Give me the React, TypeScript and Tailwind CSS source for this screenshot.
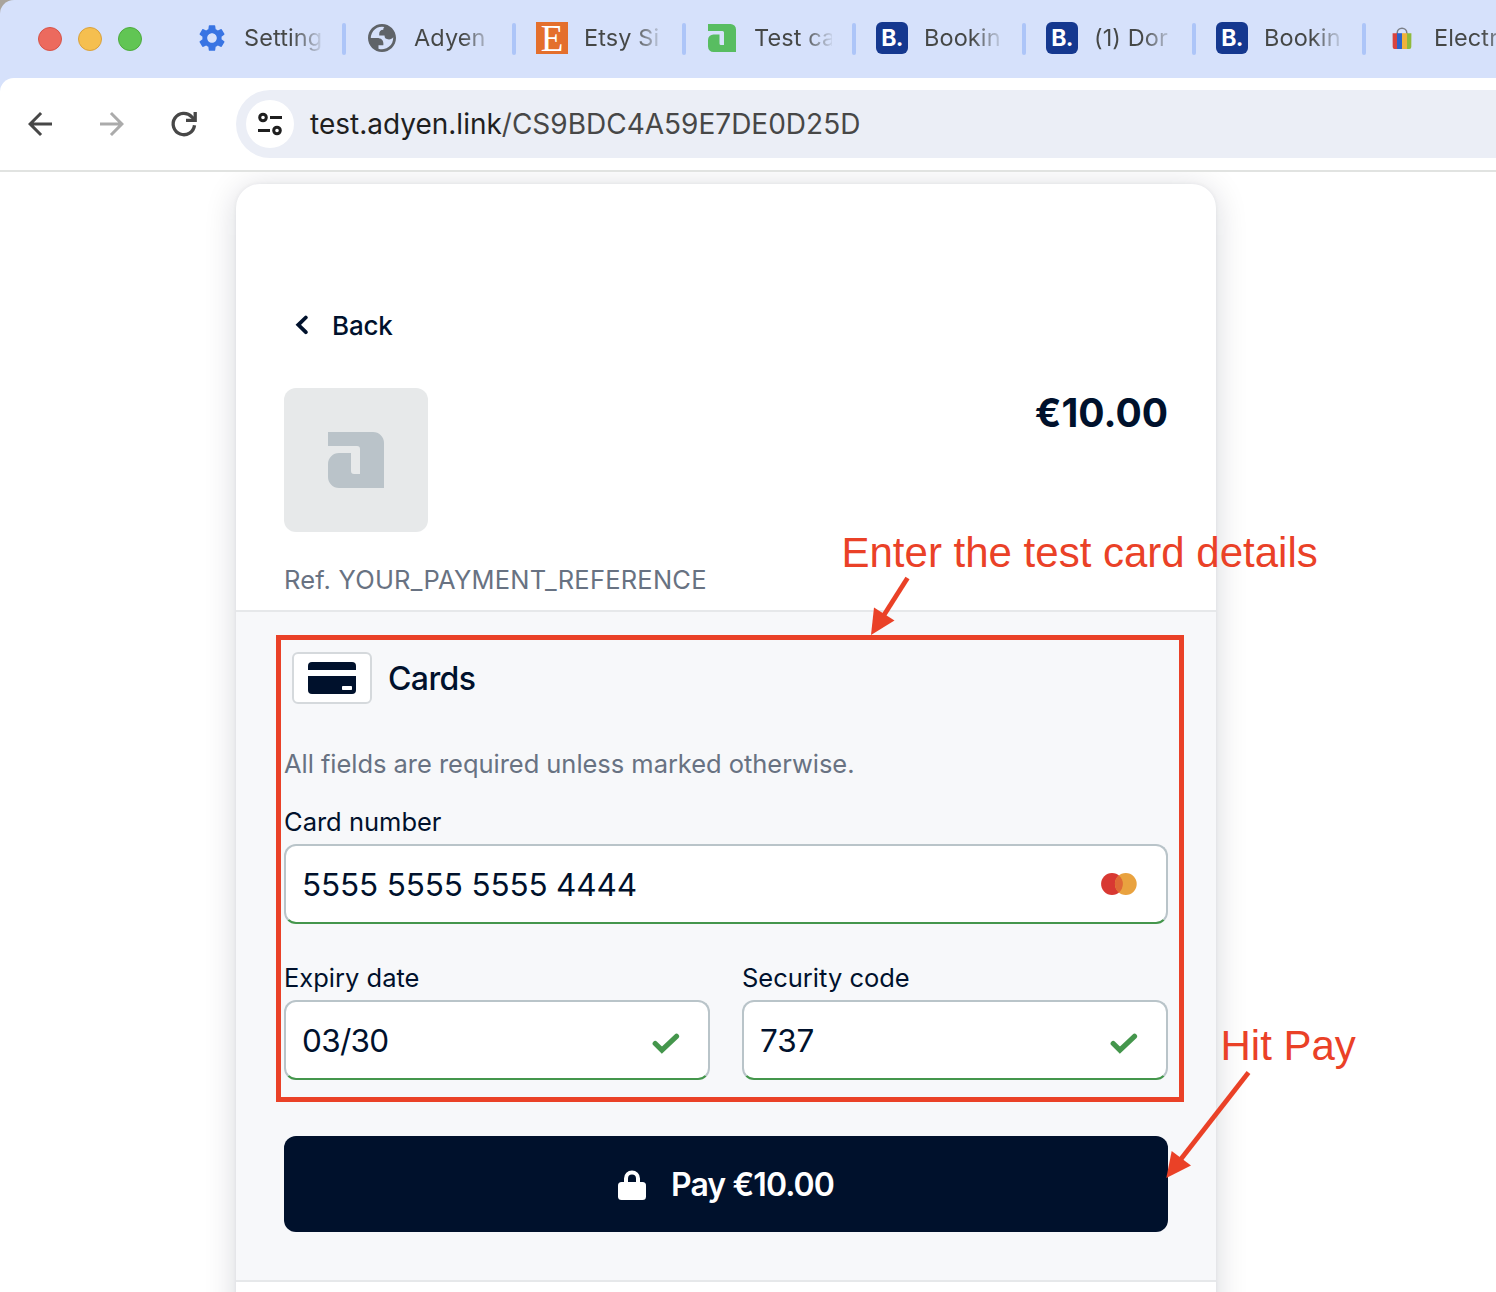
import React from "react";
import { MdArrowBack, MdArrowForward, MdSettings } from "react-icons/md";

function AdyenMark({ className }: { className: string }) {
  return (
    <svg viewBox="0 0 56 56" className={className} fill="currentColor">
      <path d="M0 0H45A11 11 0 0 1 56 11V56H11A11 11 0 0 1 0 45V32A11 11 0 0 1 11 21H23V39A3 3 0 0 0 26 42H32V17A3 3 0 0 0 29 14H0Z" />
    </svg>
  );
}

function BookingIcon() {
  return (
    <span className="flex h-8 w-8 items-center justify-center rounded-[6px] bg-[#15388f] text-[23px] font-bold leading-8 tracking-[-0.7px] text-white">
      B.
    </span>
  );
}

function EtsyIcon() {
  return (
    <span className="flex h-8 w-8 items-center justify-center bg-[#e46f2c] font-['Liberation_Serif',serif] text-[37px] leading-8 text-white">
      <span className="-mb-0.5">E</span>
    </span>
  );
}

function GlobeIcon() {
  return (
    <svg viewBox="2 2 20 20" className="h-7 w-7" fill="#5f6368" fillRule="evenodd">
      <path d="M12 2C6.480 2 2 6.480 2 12s4.480 10 10 10 10-4.480 10-10S17.520 2 12 2zM4 12h4.400c3.407.022 4.922 1.730 4.543 5.127H9.488v2.470a8.004 8.004 0 0 0 10.498-8.083C19.327 12.504 18.332 13 17 13c-2.137 0-3.206-.916-3.206-2.750h-3.748c-.274-2.728.683-4.092 2.870-4.092 0-.975.327-1.597.811-1.970A8 8 0 0 0 4 12z" />
    </svg>
  );
}

function EbayBag() {
  return (
    <svg viewBox="0 0 20 24" className="h-6 w-5">
      <path d="M5.200 8V7a4.800 4.800 0 0 1 9.600 0v1" fill="none" stroke="#7b7f87" strokeWidth="1.500" />
      <path d="M.6 7.200H5V23H2.500A2 2 0 0 1 .7 21Z" fill="#d8423f" />
      <path d="M5 7.200h5V23H5Z" fill="#2b62cc" />
      <path d="M10 7.200h5V23h-5Z" fill="#f0b23c" />
      <path d="M15 7.200h4.400L19.300 21a2 2 0 0 1-2 2H15Z" fill="#8fba3c" />
    </svg>
  );
}

const tabs = [
  { title: "Setting", icon: <MdSettings className="h-8 w-8 text-[#3874e3]" /> },
  { title: "Adyen", icon: <GlobeIcon /> },
  { title: "Etsy Si", icon: <EtsyIcon /> },
  { title: "Test ca", icon: <AdyenMark className="h-7 w-7 text-[#58bd61]" /> },
  { title: "Bookin", icon: <BookingIcon /> },
  { title: "(1) Dor", icon: <BookingIcon /> },
  { title: "Bookin", icon: <BookingIcon /> },
  { title: "Electr", icon: <EbayBag /> },
];

function TabStrip() {
  return (
    <div className="flex h-[78px] items-center overflow-hidden rounded-tl-[14px] bg-[#d6e1fb] pl-[38px]">
      <div className="flex w-[138px] shrink-0 gap-4">
        <span className="h-6 w-6 rounded-full border border-[#d65348] bg-[#ec6a5e]" />
        <span className="h-6 w-6 rounded-full border border-[#d9a13c] bg-[#f5bf4f]" />
        <span className="h-6 w-6 rounded-full border border-[#4dab3d] bg-[#61c554]" />
      </div>
      {tabs.map((tab, i) => (
        <div key={i} className="flex w-[170px] shrink-0 items-center pb-0.5">
          <span className="ml-4 flex w-10 shrink-0 items-center justify-center">{tab.icon}</span>
          <span className="ml-3 w-[78px] overflow-hidden whitespace-nowrap bg-[linear-gradient(90deg,#454746_62%,#45474600_104%)] bg-clip-text text-[23.5px] leading-8 tracking-[0.1px] text-transparent">
            {tab.title}
          </span>
          <span className="ml-5 mt-0.5 h-8 w-1 shrink-0 rounded-[2px] bg-[#adc5f8]" />
        </div>
      ))}
    </div>
  );
}

function Toolbar() {
  return (
    <div className="bg-[#d6e1fb]">
      <div className="flex h-[94px] items-center rounded-tl-[14px] border-b-2 border-[#e1e3e1] bg-white">
        <MdArrowBack className="ml-[22px] h-9 w-9 text-[#474747]" />
        <MdArrowForward className="ml-9 h-9 w-9 text-[#ababab]" />
        <svg viewBox="0 0 28 28" className="ml-10 h-7 w-7" fill="none" stroke="#474747" strokeWidth="3.300">
          <path d="M24.500 15.200A10.700 10.700 0 1 1 21.800 6.800L24.300 9.300" />
          <path d="M25.200 2V10.300H16" />
        </svg>
        <div className="ml-[38px] flex h-[68px] flex-1 items-center rounded-l-full bg-[#ebeef6] pl-[10px]">
          <span className="flex h-12 w-12 shrink-0 items-center justify-center rounded-full bg-white">
            <svg viewBox="0 0 24 24" className="h-6 w-6" fill="none" stroke="#1f1f1f" strokeWidth="3">
              <circle cx="5" cy="5.500" r="3.300" />
              <path d="M12 5.500H24M0 18.500H12" />
              <circle cx="19" cy="18.500" r="3.300" />
            </svg>
          </span>
          <span className="ml-4 whitespace-nowrap text-[28px] leading-9 text-[#474747]">
            <span className="text-[#1f1f1f]">test.adyen.link</span>/CS9BDC4A59E7DE0D25D
          </span>
        </div>
      </div>
    </div>
  );
}

function Check() {
  return (
    <svg viewBox="0 0 28 22" className="mt-[7px] h-[22px] w-7" fill="none" stroke="#44964c" strokeWidth="5.200">
      <path d="M3.200 10.500L9.900 17.200L24.500 3.300" strokeLinecap="round" />
    </svg>
  );
}

function Mastercard() {
  return (
    <svg viewBox="0 0 36 22" className="mr-px h-[22px] w-9">
      <circle cx="11" cy="11" r="10.900" fill="#d83832" />
      <circle cx="24.800" cy="11" r="10.900" fill="#e9a23f" />
      <path d="M17.900 2.600A10.900 10.900 0 0 1 17.900 19.400A10.900 10.900 0 0 1 17.900 2.600Z" fill="#df6936" />
    </svg>
  );
}

function Field({
  label,
  value,
  icon,
  spacing = "tracking-[-0.15px]",
}: {
  label: string;
  value: string;
  icon: React.ReactNode;
  spacing?: string;
}) {
  return (
    <div className="flex-1">
      <div className="h-11 whitespace-nowrap text-[25.500px] leading-[44px]">{label}</div>
      <div className="flex h-20 items-center justify-between rounded-xl border-2 border-[#b9c4c9] border-b-[#44964c] bg-white pl-4 pr-7">
        <span className={`pt-0.5 text-[31.5px] leading-10 ${spacing}`}>{value}</span>
        {icon}
      </div>
    </div>
  );
}

function PaymentCard() {
  return (
    <main className="h-[1200px] w-[980px] rounded-t-[24px] bg-white text-[#00112c] shadow-[0_0_4px_rgba(0,17,44,0.06),0_4px_32px_rgba(0,17,44,0.16)]">
      <header className="h-[428px] border-b-2 border-[#e6e8ea] px-12 pt-[122px]">
        <div className="flex h-10 items-center pl-[11px]">
          <svg viewBox="0 0 14 20" className="-mt-0.5 h-5 w-3.5" fill="none" stroke="currentColor" strokeWidth="3.800">
            <path d="M10.800 2.500L3.300 9.800L10.800 17.200" strokeLinecap="round" />
          </svg>
          <span className="ml-[23px] text-[26px] font-medium leading-10 tracking-[-0.2px]">Back</span>
        </div>
        <div className="mt-[42px] flex items-start justify-between">
          <div className="flex h-36 w-36 items-center justify-center rounded-xl bg-[#e7e9ea]">
            <AdyenMark className="h-14 w-14 text-[#bac3c9]" />
          </div>
          <span className="text-[39px] font-bold leading-[50px]">€10.00</span>
        </div>
        <div className="mt-7 whitespace-nowrap text-[25.500px] leading-10 tracking-[0.22px] text-[#687282]">
          Ref. YOUR_PAYMENT_REFERENCE
        </div>
      </header>
      <section className="h-[670px] border-b-2 border-[#e6e8ea] bg-[#f7f8fa] px-12 pt-10">
        <div className="flex h-[52px] items-center pl-2">
          <span className="flex h-[52px] w-20 items-center justify-center rounded-[6px] border-2 border-[#d5d9dc] bg-white">
            <svg viewBox="0 0 48 32" className="h-8 w-12" fill="#00112c">
              <path d="M4 0H44A4 4 0 0 1 48 4V8H0V4A4 4 0 0 1 4 0Z" />
              <path d="M0 14H48V28A4 4 0 0 1 44 32H4A4 4 0 0 1 0 28Z" />
              <rect x="34" y="24" width="10" height="4" rx=".8" fill="#fff" />
            </svg>
          </span>
          <span className="ml-4 pt-0.5 text-[32px] font-medium leading-[52px] tracking-[-0.6px]">Cards</span>
        </div>
        <p className="mt-10 whitespace-nowrap text-[25.500px] leading-10 tracking-[-0.04px] text-[#687282]">
          All fields are required unless marked otherwise.
        </p>
        <div className="mt-4 flex">
          <Field label="Card number" value="5555 5555 5555 4444" icon={<Mastercard />} />
        </div>
        <div className="mt-8 flex gap-8">
          <Field label="Expiry date" value="03/30" icon={<Check />} spacing="tracking-[-0.7px]" />
          <Field label="Security code" value="737" icon={<Check />} />
        </div>
        <button className="mt-14 flex h-24 w-full items-center justify-center rounded-xl bg-[#00112c] pt-0.5 text-white">
          <svg viewBox="0 0 28 30" className="h-[30px] w-7">
            <path d="M8 14V8.500a6 6 0 0 1 12 0V14" fill="none" stroke="currentColor" strokeWidth="4" />
            <rect y="12" width="28" height="18" rx="3.500" fill="currentColor" />
          </svg>
          <span className="ml-[25px] text-[32px] font-semibold leading-10 tracking-[-0.9px]">Pay €10.00</span>
        </button>
      </section>
    </main>
  );
}

function Annotations() {
  return (
    <div className="pointer-events-none absolute inset-0 font-['Liberation_Sans',sans-serif] text-[42px] leading-[48px] text-[#ea4127]">
      <div className="absolute left-[276px] top-[635px] h-[467px] w-[908px] border-[5px] border-[#ea4127]" />
      <span className="absolute left-[841.5px] top-[529px] whitespace-nowrap">Enter the test card details</span>
      <span className="absolute left-[1220.5px] top-[1022px] whitespace-nowrap">Hit Pay</span>
      <svg viewBox="0 0 1496 1292" className="absolute inset-0 h-full w-full" fill="#ea4127" stroke="#ea4127">
        <path d="M907.500 578L884 615" strokeWidth="4.800" />
        <path d="M871 635L874 607.500L894.500 620.500Z" stroke="none" />
        <path d="M1248.500 1072.500L1181 1159" strokeWidth="4.800" />
        <path d="M1166.300 1178L1171.700 1151L1191 1165.500Z" stroke="none" />
      </svg>
    </div>
  );
}

export default function App() {
  return (
    <div className="relative h-[1292px] w-[1496px] overflow-hidden bg-[#a9a49c] font-['Inter',sans-serif]">
      <TabStrip />
      <Toolbar />
      <div className="h-[1120px] overflow-hidden bg-white pl-[236px] pt-3">
        <PaymentCard />
      </div>
      <Annotations />
    </div>
  );
}
